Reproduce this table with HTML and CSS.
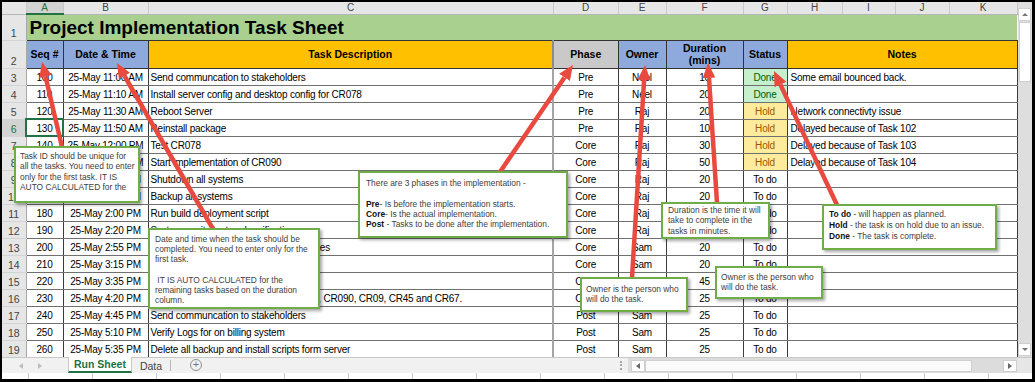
FILE: index.html
```html
<!DOCTYPE html>
<html lang="en">
<head>
    <meta charset="UTF-8">
    <meta name="viewport" content="width=device-width, initial-scale=1.0">
    <title>Project Implementation Task Sheet</title>
    <link rel="stylesheet" href="styles.css">
</head>
<body>
<div class="frame">
    <div class="main">
        <table class="sheet">
            <colgroup>
                <col class="w-rh"><col class="w-a"><col class="w-b"><col class="w-c"><col class="w-d"><col class="w-e">
                <col class="w-f"><col class="w-g"><col class="w-h"><col class="w-i"><col class="w-j"><col class="w-k">
            </colgroup>
            <tr class="letters">
                <th class="corner"></th><th class="on">A</th><th>B</th><th>C</th><th>D</th><th>E</th>
                <th>F</th><th>G</th><th>H</th><th>I</th><th>J</th><th>K</th>
            </tr>
            <tr class="r1">
                <th class="rh">1</th>
                <td class="title" colspan="11">Project Implementation Task Sheet</td>
            </tr>
            <tr class="r2">
                <th class="rh">2</th>
                <th class="hd blue">Seq #</th>
                <th class="hd blue">Date &amp; Time</th>
                <th class="hd orange">Task Description</th>
                <th class="hd grey ph">Phase</th>
                <th class="hd blue">Owner</th>
                <th class="hd blue">Duration<br>(mins)</th>
                <th class="hd blue">Status</th>
                <th class="hd orange" colspan="4">Notes</th>
            </tr>
            <tr><th class="rh">3</th><td class="c">100</td><td class="c">25-May 11:00 AM</td><td>Send communcation to stakeholders</td><td class="c ph">Pre</td><td class="c">Neel</td><td class="c">10</td><td class="c done">Done</td><td colspan="4" class="note-cell">Some email bounced back.</td></tr>
            <tr><th class="rh">4</th><td class="c">110</td><td class="c">25-May 11:10 AM</td><td>Install server config and desktop config for CR078</td><td class="c ph">Pre</td><td class="c">Neel</td><td class="c">20</td><td class="c done">Done</td><td colspan="4" class="note-cell"></td></tr>
            <tr><th class="rh">5</th><td class="c">120</td><td class="c">25-May 11:30 AM</td><td>Reboot Server</td><td class="c ph">Pre</td><td class="c">Raj</td><td class="c">20</td><td class="c hold">Hold</td><td colspan="4" class="note-cell">Network connectivty issue</td></tr>
            <tr><th class="rh on">6</th><td class="c sel">130</td><td class="c">25-May 11:50 AM</td><td>Reinstall package</td><td class="c ph">Pre</td><td class="c">Raj</td><td class="c">10</td><td class="c hold">Hold</td><td colspan="4" class="note-cell">Delayed because of Task 102</td></tr>
            <tr><th class="rh">7</th><td class="c">140</td><td class="c">25-May 12:00 PM</td><td>Test CR078</td><td class="c ph">Core</td><td class="c">Raj</td><td class="c">30</td><td class="c hold">Hold</td><td colspan="4" class="note-cell">Delayed because of Task 103</td></tr>
            <tr><th class="rh">8</th><td class="c">150</td><td class="c">25-May 12:30 PM</td><td>Start implementation of CR090</td><td class="c ph">Core</td><td class="c">Raj</td><td class="c">50</td><td class="c hold">Hold</td><td colspan="4" class="note-cell">Delayed because of Task 104</td></tr>
            <tr><th class="rh">9</th><td class="c">160</td><td class="c">25-May 1:20 PM</td><td>Shutdown all systems</td><td class="c ph">Core</td><td class="c">Raj</td><td class="c">20</td><td class="c">To do</td><td colspan="4" class="note-cell"></td></tr>
            <tr><th class="rh">10</th><td class="c">170</td><td class="c">25-May 1:40 PM</td><td>Backup all systems</td><td class="c ph">Core</td><td class="c">Raj</td><td class="c">20</td><td class="c">To do</td><td colspan="4" class="note-cell"></td></tr>
            <tr><th class="rh">11</th><td class="c">180</td><td class="c">25-May 2:00 PM</td><td>Run build deployment script</td><td class="c ph">Core</td><td class="c">Raj</td><td class="c">20</td><td class="c">To do</td><td colspan="4" class="note-cell"></td></tr>
            <tr><th class="rh">12</th><td class="c">190</td><td class="c">25-May 2:20 PM</td><td>System sanity test and verification</td><td class="c ph">Core</td><td class="c">Raj</td><td class="c">20</td><td class="c">To do</td><td colspan="4" class="note-cell"></td></tr>
            <tr><th class="rh">13</th><td class="c">200</td><td class="c">25-May 2:55 PM</td><td>Restart all systems and verify the changes</td><td class="c ph">Core</td><td class="c">Sam</td><td class="c">20</td><td class="c">To do</td><td colspan="4" class="note-cell"></td></tr>
            <tr><th class="rh">14</th><td class="c">210</td><td class="c">25-May 3:15 PM</td><td>Start all systems</td><td class="c ph">Core</td><td class="c">Sam</td><td class="c">20</td><td class="c">To do</td><td colspan="4" class="note-cell"></td></tr>
            <tr><th class="rh">15</th><td class="c">220</td><td class="c">25-May 3:35 PM</td><td>Smoke test all applications</td><td class="c ph">Core</td><td class="c">Sam</td><td class="c">45</td><td class="c">To do</td><td colspan="4" class="note-cell"></td></tr>
            <tr><th class="rh">16</th><td class="c">230</td><td class="c">25-May 4:20 PM</td><td>Run the regression test suite for CR078, CR090, CR09, CR45 and CR67.</td><td class="c ph">Core</td><td class="c">Sam</td><td class="c">25</td><td class="c">To do</td><td colspan="4" class="note-cell"></td></tr>
            <tr><th class="rh">17</th><td class="c">240</td><td class="c">25-May 4:45 PM</td><td>Send communcation to stakeholders</td><td class="c ph">Post</td><td class="c">Sam</td><td class="c">25</td><td class="c">To do</td><td colspan="4" class="note-cell"></td></tr>
            <tr><th class="rh">18</th><td class="c">250</td><td class="c">25-May 5:10 PM</td><td>Verify Logs for on billing system</td><td class="c ph">Post</td><td class="c">Sam</td><td class="c">25</td><td class="c">To do</td><td colspan="4" class="note-cell"></td></tr>
            <tr><th class="rh">19</th><td class="c">260</td><td class="c">25-May 5:35 PM</td><td>Delete all backup and install scripts form server</td><td class="c ph">Post</td><td class="c">Sam</td><td class="c">25</td><td class="c">To do</td><td colspan="4" class="note-cell"></td></tr>
        </table>

        <div class="vscroll">
            <div class="vbtn"><i class="up"></i></div>
            <div class="vthumb"></div>
            <div class="vtrack"></div>
            <div class="vbtn"><i class="down"></i></div>
        </div>
    </div>

    <div class="tabbar">
        <div class="nav"><i class="prev"></i><i class="next"></i></div>
        <div class="tab on">Run Sheet</div>
        <div class="tab data">Data</div>
        <div class="sep"></div>
        <div class="add">+</div>
        <div class="fill"></div>
        <div class="grip"></div>
        <div class="hscroll">
            <div class="hbtn"><i class="prev dark"></i></div>
            <div class="hthumb"></div>
            <div class="htrack"></div>
            <div class="hbtn"><i class="next dark"></i></div>
        </div>
        <div class="corner-box"></div>
    </div>

    <div class="strip"></div>

    <!-- callout arrows, drawn in page coordinates -->
    <svg class="arrows" width="1030" height="377" viewBox="2 2 1030 377">
        <defs>
            <marker id="head" markerUnits="userSpaceOnUse" markerWidth="15" markerHeight="13" refX="0" refY="6.5" orient="auto">
                <path d="M0,0 L15,6.5 L0,13 z" fill="#e84a3f"/>
            </marker>
        </defs>
        <g stroke="#e84a3f" stroke-width="4.5" marker-end="url(#head)">
            <line x1="62" y1="147" x2="45.5" y2="76.6"/>
            <line x1="213" y1="229" x2="124.5" y2="76"/>
            <line x1="500" y1="172" x2="564.5" y2="77.4"/>
            <line x1="632" y1="278" x2="644.1" y2="80"/>
            <line x1="717" y1="203" x2="709" y2="78"/>
            <line x1="837" y1="205" x2="780.4" y2="84.6"/>
        </g>
    </svg>

    <div class="note n-seq">Task ID should be unique for<br>all the tasks. You need to enter<br>only for the first task. IT IS<br>AUTO CALCULATED for the</div>
    <div class="note n-date">Date and time when the task should be<br>completed. You need to enter only for the<br>first task.<br><br>&nbsp;IT IS AUTO CALCULATED for the<br>remaining tasks based on the duration<br>column.</div>
    <div class="note n-phase">There are 3 phases in the implementation -<br><br><b>Pre</b>- Is before the implementation starts.<br><b>Core</b>- Is the actual implementation.<br><b>Post</b> - Tasks to be done after the implementation.</div>
    <div class="note n-dur">Duration is the time it will<br>take to complete in the<br>tasks in minutes.</div>
    <div class="note n-status"><b>To do</b> - will happen as planned.<br><b>Hold</b> - the task is on hold due to an issue.<br><b>Done</b> - The task is complete.</div>
    <div class="note n-own1">Owner is the person who<br>will do the task.</div>
    <div class="note n-own2">Owner is the person who<br>will do the task.</div>
</div>
</body>
</html>
```

FILE: styles.css
```css
body {
  margin: 0;
  background: #ffffff;
  font-family: "Liberation Sans", Arial, sans-serif;
}

.frame {
  position: relative;
  width: 1035px;
  height: 382px;
  box-sizing: border-box;
  border: 2px solid #000;
  border-right-width: 3px;
  border-bottom-width: 3px;
  display: flex;
  flex-direction: column;
  overflow: hidden;
  background: #fff;
}

.main {
  display: flex;
  height: 355px;
  overflow: hidden;
}

/* spreadsheet grid */
.sheet {
  width: 1015px;
  border-collapse: collapse;
  table-layout: fixed;
  font-size: 10px;
  letter-spacing: -0.2px;
  color: #000;
}

.w-rh { width: 24px; }
.w-a { width: 37px; }
.w-b { width: 85px; }
.w-c { width: 405px; }
.w-d { width: 65px; }
.w-e { width: 48px; }
.w-f { width: 77px; }
.w-g { width: 44px; }
.w-h { width: 55px; }
.w-i { width: 53px; }
.w-j { width: 54px; }
.w-k { width: 68px; }

.sheet tr { height: 17px; }
.sheet tr.letters { height: 12px; }
.sheet tr.r1 { height: 26px; }
.sheet tr.r2 { height: 28px; }

.sheet td {
  border: 1px solid #3c3c3c;
  border-top-color: #707070;
  border-bottom-color: #707070;
  padding: 0 2px 1px;
  white-space: nowrap;
  overflow: hidden;
  vertical-align: bottom;
  line-height: 13px;
}

.sheet td.c { text-align: center; }
.sheet td.note-cell { padding-left: 3px; }
.sheet td.done { background: #c6efce; color: #006100; }
.sheet td.hold { background: #ffeb9c; color: #9c5700; }
.sheet .ph { border-left: 2px solid #a5a5a5; }
.sheet td.sel { outline: 2px solid #217346; outline-offset: -1px; }

.letters th {
  background: #e6e6e6;
  color: #444;
  font-weight: normal;
  font-size: 10px;
  letter-spacing: 0;
  line-height: 11px;
  padding: 0;
  border-right: 1px solid #c9c9c9;
  border-bottom: 1px solid #b5b5b5;
}

.letters th.on {
  background: #d3d3d3;
  color: #217346;
  border-bottom: 2px solid #217346;
}

.sheet .rh {
  background: #e6e6e6;
  color: #444;
  font-weight: normal;
  font-size: 10.5px;
  letter-spacing: 0;
  padding: 0;
  text-align: center;
  vertical-align: bottom;
  line-height: 14px;
  border-right: 1px solid #a8a8a8;
  border-bottom: 1px solid #d4d4d4;
}

.sheet .rh.on { background: #d3d3d3; color: #217346; }

.sheet td.title {
  background: #a9d08e;
  font-size: 19px;
  font-weight: bold;
  letter-spacing: 0;
  line-height: 22px;
  padding: 0 0 1px 3px;
  border: none;
}

.sheet .hd {
  font-size: 10.5px;
  font-weight: bold;
  letter-spacing: 0;
  line-height: 12px;
  text-align: center;
  vertical-align: middle;
  padding: 0;
  border: 1px solid #333;
}

.sheet .hd.ph { border-left: 2px solid #8c8c8c; }
.blue { background: #8ea9db; }
.orange { background: #ffc000; }
.grey { background: #c9c9c9; }

/* vertical scrollbar */
.vscroll {
  width: 15px;
  background: #dedede;
  display: flex;
  flex-direction: column;
  align-items: center;
  padding: 6px 0 1px;
  box-sizing: border-box;
}

.vbtn {
  width: 13px;
  height: 13px;
  background: #fff;
  border: 1px solid #cfcfcf;
  box-sizing: border-box;
  display: flex;
  align-items: center;
  justify-content: center;
}

.vthumb {
  width: 12px;
  height: 60px;
  background: #fff;
  border: 1px solid #cfcfcf;
  box-sizing: border-box;
  margin-top: 1px;
}

.vtrack { flex: 1; }

.up, .down, .prev, .next {
  width: 0;
  height: 0;
  border: 3px solid transparent;
}

.up { border-bottom: 3px solid #777; border-top: 0; }
.down { border-top: 3px solid #777; border-bottom: 0; }
.prev { border-right: 4px solid #bcbcbc; border-left: 0; }
.next { border-left: 4px solid #bcbcbc; border-right: 0; }
.prev.dark { border-right-color: #666; }
.next.dark { border-left-color: #666; }

/* sheet tabs */
.tabbar {
  display: flex;
  height: 16px;
  background: #f1f1f1;
  border-top: 1px solid #c8c8c8;
  box-sizing: border-box;
  font-size: 10.5px;
}

.nav {
  width: 66px;
  display: flex;
  align-items: center;
  gap: 15px;
  padding-left: 17px;
  box-sizing: border-box;
}

.tab {
  display: flex;
  align-items: center;
  justify-content: center;
  box-sizing: border-box;
}

.tab.on {
  width: 64px;
  background: #fff;
  color: #217346;
  font-weight: bold;
  border-left: 1px solid #c8c8c8;
  border-right: 1px solid #c8c8c8;
  border-bottom: 2px solid #217346;
  margin-top: -1px;
}

.tab.data { width: 38px; color: #444; }

.sep {
  width: 1px;
  background: #b9b9b9;
  margin: 2px 0;
}

.add {
  width: 12px;
  height: 12px;
  margin: 1px 0 0 19px;
  border: 1px solid #8e8e8e;
  border-radius: 50%;
  box-sizing: border-box;
  color: #777;
  font-size: 11px;
  line-height: 9px;
  text-align: center;
}

.fill { flex: 1; }

.grip {
  width: 6px;
  border-left: 2px dotted #a6a6a6;
  margin: 3px 0;
}

.hscroll {
  width: 389px;
  display: flex;
  align-items: center;
  background: #dcdcdc;
  padding-left: 3px;
  box-sizing: border-box;
}

.hbtn {
  width: 14px;
  height: 12px;
  background: #fff;
  border: 1px solid #cfcfcf;
  box-sizing: border-box;
  display: flex;
  align-items: center;
  justify-content: center;
}

.hthumb {
  width: 327px;
  height: 12px;
  background: #fafafa;
  border: 1px solid #cfcfcf;
  box-sizing: border-box;
}

.htrack { flex: 1; }

.corner-box { width: 15px; background: #e6e6e6; }

.strip {
  flex: 1;
  background-color: #fff;
  background-image: linear-gradient(to right, #cdcdcd 1px, transparent 1px);
  background-size: 64px 100%;
  background-position: 26px 0;
}

/* overlays */
.arrows {
  position: absolute;
  left: 0;
  top: 0;
  z-index: 2;
}

.note {
  position: absolute;
  z-index: 3;
  box-sizing: border-box;
  background: #fff;
  border: 2px solid #70ad47;
  box-shadow: 2px 2px 3px rgba(0, 0, 0, 0.35);
  font-size: 8.4px;
  line-height: 10.4px;
  color: #404040;
  white-space: nowrap;
}

.note b { color: #111; }

.n-seq { left: 12px; top: 144px; width: 126px; height: 57px; padding: 3px 4px; }
.n-date { left: 146px; top: 226px; width: 172px; height: 81px; padding: 4px 5px; line-height: 10.2px; }
.n-phase { left: 356px; top: 169px; width: 210px; height: 67px; padding: 5px 6px; line-height: 10.3px; }
.n-dur { left: 659px; top: 200px; width: 109px; height: 37px; padding: 1px 5px; }
.n-status { left: 820px; top: 202px; width: 175px; height: 46px; padding: 3px 5px; line-height: 10.9px; }
.n-own1 { left: 578px; top: 275px; width: 108px; height: 35px; padding: 5px 4px; }
.n-own2 { left: 713px; top: 264px; width: 108px; height: 33px; padding: 4px 4px; }
```
